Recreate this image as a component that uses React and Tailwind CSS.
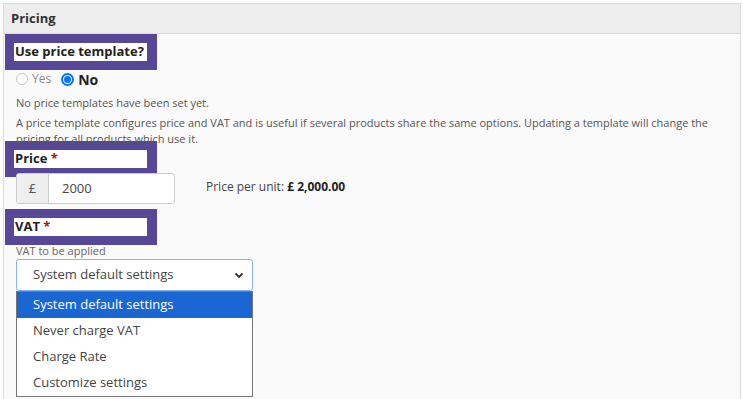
export default function App() {
  const font = { fontFamily: '"Open Sans", "Liberation Sans", sans-serif' }
  return (
    <div className="w-[743px] h-[399px] bg-white pt-[3px] pl-[3px] pr-[2px] overflow-hidden" style={font}>
      <div className="border border-[#dcdcdc] bg-[#fafafa] h-[420px]">
        <div className="h-[30px] bg-[#ededed] border-b border-[#dcdcdc] flex items-center px-[7px] text-[13px] font-bold text-[#333]">
          Pricing
        </div>

        <PurpleLabel>Use price template?</PurpleLabel>

        <div className="flex items-center h-[18px] pl-[12px] text-[12px]">
          <span className="w-[12px] h-[12px] rounded-full border border-[#c8c8c8] bg-white" />
          <span className="ml-[4px] text-[#8a8a8a]">Yes</span>
          <span className="ml-[10px] w-[13px] h-[13px] rounded-full border-[2px] border-[#0075ff] bg-white flex items-center justify-center">
            <span className="w-[7px] h-[7px] rounded-full bg-[#0075ff]" />
          </span>
          <span className="ml-[4px] text-[14px] font-bold text-[#222]">No</span>
        </div>

        <div className="pl-[12px] pr-[20px] text-[11px] text-[#555] leading-[16px]">
          <p className="mt-[7px]">No price templates have been set yet.</p>
          <p className="mt-[4px]">
            A price template configures price and VAT and is useful if several products share the same options. Updating a template will change the pricing for all products which use it.
          </p>
        </div>

        <div className="-mt-[6px]">
          <PurpleLabel>
            <span>Price&nbsp;<span className="text-[#a11]">*</span></span>
          </PurpleLabel>
        </div>

        <div className="flex items-center pl-[12px] -mt-[4px]">
          <div className="flex h-[31px] w-[159px] border border-[#ccc] rounded-[3px] bg-white text-[13px]">
            <span className="w-[32px] bg-[#eee] border-r border-[#ccc] flex items-center justify-center text-[#555] rounded-l-[3px]">£</span>
            <span className="flex items-center pl-[13px] text-[#444]">2000</span>
          </div>
          <span className="ml-[31px] -mt-[4px] text-[12px] text-[#444]">
            Price per unit: <b className="text-[#222]">£ 2,000.00</b>
          </span>
        </div>

        <div className="mt-[5px]">
          <PurpleLabel>
            <span>VAT&nbsp;<span className="text-[#a11]">*</span></span>
          </PurpleLabel>
        </div>

        <div className="pl-[12px] text-[11px] text-[#666] leading-[14px] mt-[-1px]">VAT to be applied</div>

        <div className="pl-[12px] mt-[1px]">
          <div className="w-[237px] h-[32px] border border-[#8ab4f0] rounded-[3px] bg-white flex items-center justify-between pl-[16px] pr-[8px] text-[13px] text-[#444]">
            <span>System default settings</span>
            <svg width="10" height="8" viewBox="0 0 10 8">
              <path d="M1.5 2.5 L5 6 L8.5 2.5" fill="none" stroke="#333" strokeWidth="1.8" />
            </svg>
          </div>
          <div className="w-[237px] border border-[#767676] bg-white text-[13px] text-[#444]">
            <div className="h-[26px] bg-[#1a66d2] text-white flex items-center pl-[16px]">System default settings</div>
            <div className="h-[26px] flex items-center pl-[16px]">Never charge VAT</div>
            <div className="h-[26px] flex items-center pl-[16px]">Charge Rate</div>
            <div className="h-[26px] flex items-center pl-[16px]">Customize settings</div>
          </div>
        </div>
      </div>
    </div>
  )
}

function PurpleLabel({ children }) {
  return (
    <div className="ml-[1px] w-[152px] h-[36px] bg-[#574897] pl-[9px] pr-[10px] pt-[9px]">
      <div className="bg-white h-[18px] flex items-center pl-[1px] text-[13px] font-bold text-[#222]">{children}</div>
    </div>
  )
}
